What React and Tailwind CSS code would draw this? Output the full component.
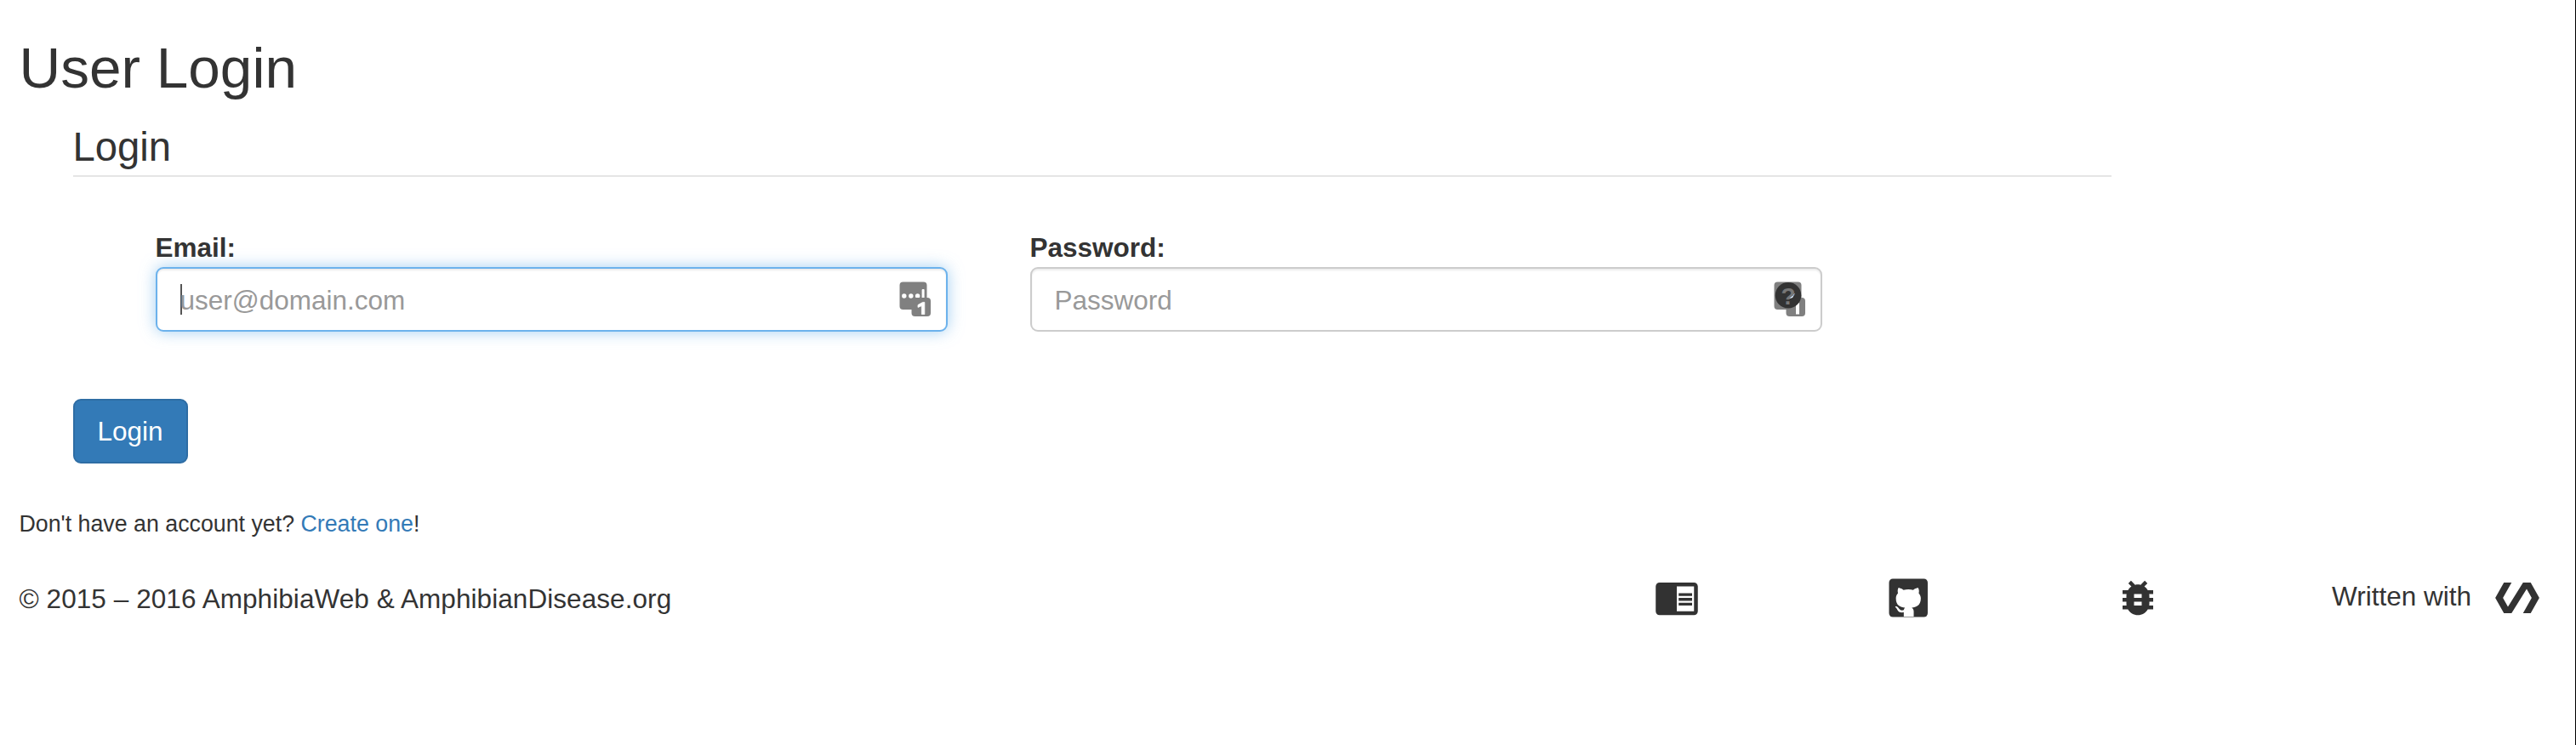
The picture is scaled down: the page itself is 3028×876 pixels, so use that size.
import React from "react";

function Icon({ d, className = "" }) {
  return (
    <svg viewBox="0 0 24 24" className={`size-[54px] shrink-0 fill-[#323232] ${className}`} aria-hidden="true">
      <path d={d} />
    </svg>
  );
}

const READER =
  "M13 12h7v1.5h-7zm0-2.5h7V11h-7zm0 5h7V16h-7zM21 4H3c-1.1 0-2 .9-2 2v13c0 1.1.9 2 2 2h18c1.1 0 2-.9 2-2V6c0-1.1-.9-2-2-2zm0 15h-9V6h9v13z";
const BUG =
  "M20 8h-2.81c-.45-.78-1.07-1.45-1.82-1.96L17 4.41 15.59 3l-2.17 2.17C12.96 5.06 12.49 5 12 5c-.49 0-.96.06-1.41.17L8.41 3 7 4.41l1.62 1.63C7.88 6.55 7.26 7.22 6.81 8H4v2h2.09c-.05.33-.09.66-.09 1v1H4v2h2v1c0 .34.04.67.09 1H4v2h2.81c1.04 1.79 2.97 3 5.19 3s4.15-1.21 5.19-3H20v-2h-2.09c.05-.33.09-.66.09-1v-1h2v-2h-2v-1c0-.34-.04-.67-.09-1H20V8zm-6 8h-4v-2h4v2zm0-4h-4v-2h4v2z";
const POLYMER =
  "M19 4h-4L7.11 16.63 4.5 12 9 4H5L.5 12 5 20h4l7.89-12.63L19.5 12 15 20h4l4.5-8z";

function GithubIcon() {
  return (
    <svg viewBox="0 0 24 24" className="ml-[218px] size-[54px] shrink-0" aria-hidden="true">
      <rect x="2" y="2" width="20.2" height="20" rx="2" fill="#323232" />
      <path
        fill="#fff"
        d="M9.7 21.8V19.6C7.8 19.9 6.9 19.2 6.4 18.3C6 17.4 5.3 17 5.2 16.7C5.1 16.3 6.3 16.2 6.9 17.2C7.4 18.1 8.5 18.9 9.7 18.3C9.8 17.8 10 17.4 10.3 17.1C8 16.9 5.6 16 5.6 12.2C5.6 11.1 6 10.2 6.7 9.5C6.6 9.2 6.3 8.2 6.8 6.85C6.8 6.85 7.6 6.6 9.6 7.87C10.4 7.65 11.2 7.54 12.1 7.54C13 7.54 13.8 7.65 14.6 7.87C16.5 6.6 17.3 6.85 17.3 6.85C17.9 8.2 17.6 9.2 17.5 9.5C18.1 10.2 18.6 11.1 18.6 12.2C18.6 16 16.1 16.9 13.9 17.1C14.3 17.4 14.9 18 14.9 19V21.8Z"
      />
    </svg>
  );
}

function FillBadge({ masked }) {
  return (
    <svg viewBox="0 0 38 42" className="h-[42px] w-[38px] shrink-0 overflow-visible" aria-hidden="true">
      <rect x="0.5" y="0.5" width="32" height="32.5" rx="4" fill="#808080" />
      {!masked && (
        <g fill="#fff">
          <circle cx="5.8" cy="17" r="2.7" />
          <circle cx="13.8" cy="17" r="2.7" />
          <circle cx="21.6" cy="17" r="2.7" />
          <rect x="26.6" y="9" width="3" height="11" rx="1" />
        </g>
      )}
      <rect x="14.5" y="19" width="22.5" height="22" rx="4" fill="#808080" />
      {masked ? (
        <>
          <rect x="26" y="25" width="4" height="13.5" fill="#fff" />
          <circle cx="17" cy="16.3" r="15.3" fill="#333" />
          <path d="M18 18L25 14L22 19L16 21Z" fill="#fff" />
          <text x="17" y="27" textAnchor="middle" className="fill-[#777] text-[28px] font-bold">?</text>
        </>
      ) : (
        <path
          d="M26.4 38.6V28.6L22 30.4V27.6L27.6 24.4H29.8V38.6Z"
          fill="#fff"
          stroke="#fff"
          strokeWidth="0.8"
        />
      )}
    </svg>
  );
}

function Field({ label, placeholder, focused }) {
  return (
    <div className="flex w-[931px] flex-col">
      <label className="h-[45px] text-[31.5px] leading-[45px] font-bold">{label}</label>
      <div
        className={
          "flex h-[76px] items-center justify-between rounded-[9px] border-2 bg-white pr-[17px] pl-[27px] " +
          (focused
            ? "border-[#6cb2ec] shadow-[inset_0_2px_2px_rgba(0,0,0,0.075),0_0_18px_rgba(102,175,233,0.6)]"
            : "border-[#ccc] shadow-[inset_0_2px_2px_rgba(0,0,0,0.075)]")
        }
      >
        <div className="flex items-center">
          {focused && <span className="-mr-0.5 h-[36px] w-0.5 bg-[#555]" />}
          <span className="pt-[3px] text-[31.5px] leading-[45px] text-[#999]">{placeholder}</span>
        </div>
        <FillBadge masked={!focused} />
      </div>
    </div>
  );
}

export default function App() {
  return (
    <div className="flex h-[876px] w-[3028px] justify-between overflow-hidden bg-white font-['Liberation_Sans',Arial,sans-serif] text-[#333]">
      <main className="w-[3020px] pt-[43px] pl-[22.5px]">
        <h1 className="h-[95px] text-[67.5px] leading-[74.25px]">User Login</h1>
        <form className="ml-[63px] w-[2396px]">
          <h2 className="h-[70px] border-b-2 border-[#e5e5e5] text-[47.25px] leading-[69px]">Login</h2>
          <div className="mt-[61px] flex gap-[97px] pl-[97px]">
            <Field label="Email:" placeholder="user@domain.com" focused />
            <Field label="Password:" placeholder="Password" />
          </div>
          <button
            type="button"
            className="mt-[79px] block h-[76px] w-[135px] rounded-[9px] border-2 border-[#2e6da4] bg-[#337ab7] pt-px text-[31.5px] leading-[45px] text-white"
          >
            Login
          </button>
        </form>
        <p className="mt-[52px] text-[26.775px] leading-[38px]">
          Don't have an account yet? <a className="text-[#337ab7]">Create one</a>!
        </p>
        <footer className="mt-[41px] flex h-[54px] items-center">
          <p className="w-[1921.5px] pt-[3px] text-[31.5px] leading-[45px] tracking-[0.07px]">
            © 2015 – 2016 AmphibiaWeb &amp; AmphibianDisease.org
          </p>
          <Icon d={READER} />
          <GithubIcon />
          <Icon d={BUG} className="ml-[216px]" />
          <span className="ml-[201px] w-[191px] pb-[3px] text-[31.5px] leading-[45px]">Written with</span>
          <Icon d={POLYMER} />
        </footer>
      </main>
      <div className="w-px bg-black" />
    </div>
  );
}
